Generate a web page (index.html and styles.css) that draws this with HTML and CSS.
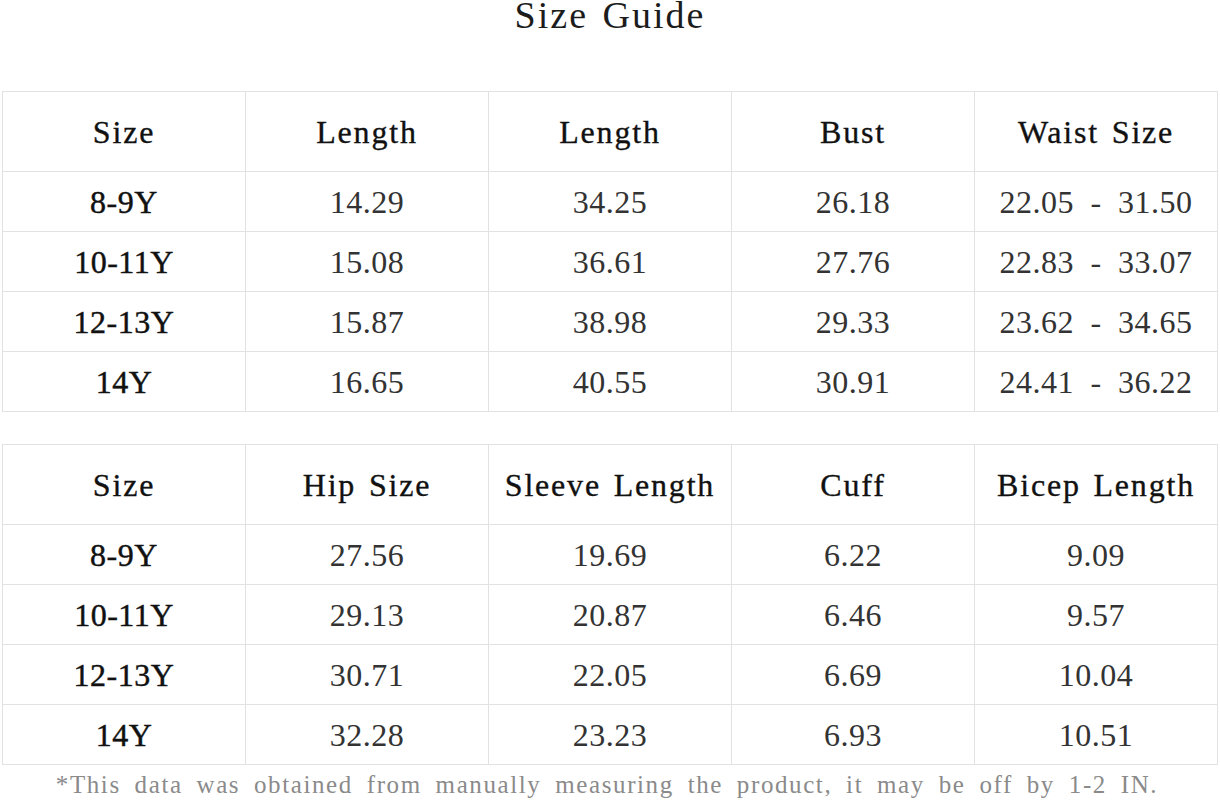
FILE: index.html
```html
<!DOCTYPE html>
<html lang="en">
<head>
<meta charset="utf-8">
<title>Size Guide</title>
<link rel="stylesheet" href="styles.css">
</head>
<body>
<main class="page">
  <h1 class="title">Size Guide</h1>

  <table class="grid">
    <thead>
      <tr><th>Size</th><th>Length</th><th>Length</th><th>Bust</th><th>Waist Size</th></tr>
    </thead>
    <tbody>
      <tr><th>8-9Y</th><td>14.29</td><td>34.25</td><td>26.18</td><td>22.05 - 31.50</td></tr>
      <tr><th>10-11Y</th><td>15.08</td><td>36.61</td><td>27.76</td><td>22.83 - 33.07</td></tr>
      <tr><th>12-13Y</th><td>15.87</td><td>38.98</td><td>29.33</td><td>23.62 - 34.65</td></tr>
      <tr><th>14Y</th><td>16.65</td><td>40.55</td><td>30.91</td><td>24.41 - 36.22</td></tr>
    </tbody>
  </table>

  <table class="grid grid-second">
    <thead>
      <tr><th>Size</th><th>Hip Size</th><th>Sleeve Length</th><th>Cuff</th><th>Bicep Length</th></tr>
    </thead>
    <tbody>
      <tr><th>8-9Y</th><td>27.56</td><td>19.69</td><td>6.22</td><td>9.09</td></tr>
      <tr><th>10-11Y</th><td>29.13</td><td>20.87</td><td>6.46</td><td>9.57</td></tr>
      <tr><th>12-13Y</th><td>30.71</td><td>22.05</td><td>6.69</td><td>10.04</td></tr>
      <tr><th>14Y</th><td>32.28</td><td>23.23</td><td>6.93</td><td>10.51</td></tr>
    </tbody>
  </table>

  <p class="note">*This data was obtained from manually measuring the product, it may be off by 1-2 IN.</p>
</main>
</body>
</html>
```

FILE: styles.css
```css
html, body {
  margin: 0;
  padding: 0;
  background: #ffffff;
}

.page {
  width: 1220px;
  height: 805px;
  overflow: hidden;
  padding: 0 2px;
  box-sizing: border-box;
  font-family: "Liberation Serif", "Times New Roman", serif;
  color: #222;
}

.title {
  margin: 0;
  font-size: 38px;
  line-height: 30px;
  font-weight: normal;
  text-align: center;
  letter-spacing: 2px;
  word-spacing: 3px;
  color: #1c1c1c;
}

.grid {
  width: 1216px;
  margin-top: 61px;
  border-collapse: collapse;
  table-layout: fixed;
}

.grid-second {
  margin-top: 32px;
}

.grid th,
.grid td {
  border: 1px solid #e2e2e2;
  padding: 0;
  text-align: center;
  vertical-align: middle;
  font-size: 32px;
  line-height: 32px;
  height: 59px;
}

.grid thead th {
  height: 79px;
  font-weight: normal;
  color: #111;
  letter-spacing: 1.8px;
  word-spacing: 3px;
  -webkit-text-stroke: 0.35px #111;
}

.grid tbody th {
  font-weight: normal;
  color: #111;
  letter-spacing: 0.5px;
  -webkit-text-stroke: 0.45px #111;
}

.grid td {
  color: #333;
  letter-spacing: 0.5px;
  word-spacing: 8px;
}

.note {
  margin: 5px 0 0;
  padding-right: 6px;
  font-size: 25px;
  line-height: 30px;
  text-align: center;
  color: #8a8a8a;
  letter-spacing: 1.6px;
  word-spacing: 6px;
  white-space: nowrap;
}
```
